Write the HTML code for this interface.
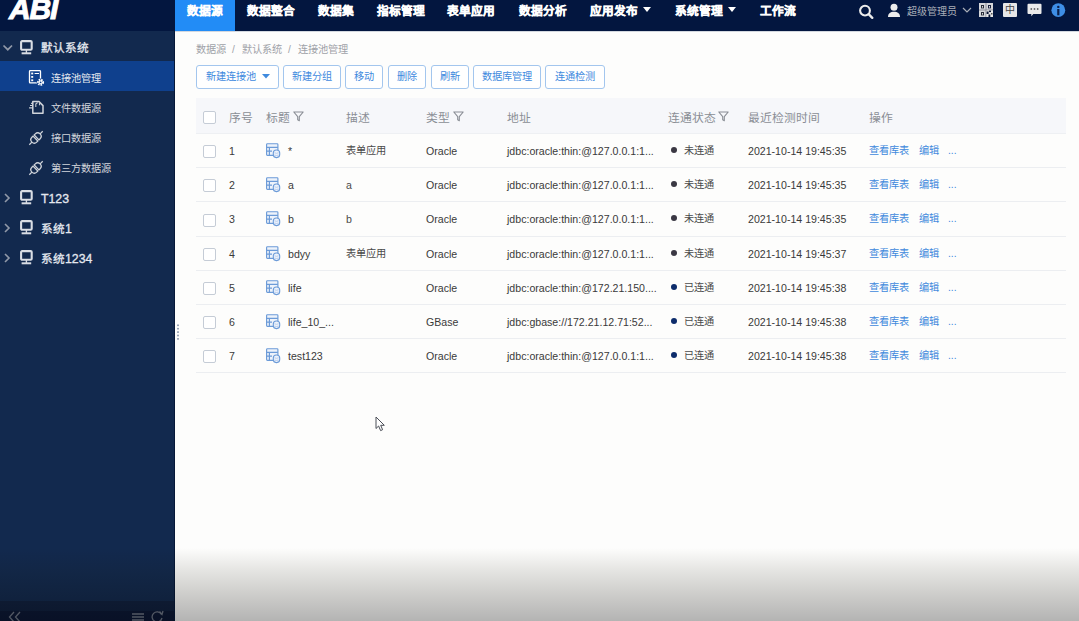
<!DOCTYPE html>
<html lang="zh-CN"><head><meta charset="utf-8">
<style>
*{box-sizing:border-box;margin:0;padding:0}
html,body{width:1079px;height:621px;overflow:hidden;background:#fdfdfc;font-family:"Liberation Sans",sans-serif;}
.a{position:absolute;white-space:nowrap}
#hdr{position:absolute;left:0;top:0;width:1079px;height:31px;background:#03163f}
#logo{position:absolute;left:9px;top:-8px;color:#fff;font:italic bold 30px "Liberation Sans",sans-serif;letter-spacing:-1.2px;-webkit-text-stroke:1px #fff}
.nav{position:absolute;top:3px;line-height:16px;color:#f4f4f4;font-size:11.7px;font-weight:700;-webkit-text-stroke:0.35px #fff;white-space:nowrap}
#side{position:absolute;left:0;top:31px;width:175px;height:590px;background:#12294e;border-right:1px solid #061838}
.srow{position:absolute;left:0;width:174px;height:30px;color:#e4e8ef;white-space:nowrap}
.srow.act{background:#0f408d}
.st{position:absolute;top:8px;line-height:16px}
.crumb{position:absolute;top:43px;font-size:10.2px;line-height:14px;color:#9fa2a8;white-space:nowrap}
.btn{position:absolute;top:65px;height:24px;border:1px solid #a3c6ee;border-radius:3px;color:#3f8ade;font-size:10.2px;line-height:22px;text-align:center;background:#fff;white-space:nowrap}
#thead{position:absolute;left:196px;top:98px;width:870px;height:36px;background:#f6f7fa;border-bottom:1px solid #eef0f3}
.cb{position:absolute;left:203px;width:13px;height:13px;border:1px solid #c5ccd6;border-radius:2px;background:#fff}
.th{position:absolute;top:109.5px;font-size:11.8px;line-height:16px;color:#8a8e95;white-space:nowrap}
.td{position:absolute;font-size:10.6px;line-height:14px;color:#3a3a3a;white-space:nowrap}
.rline{position:absolute;left:196px;width:870px;height:1px;background:#eceef1}
.lk{color:#3f89dc;font-size:10.2px}
.dot{display:inline-block;width:6px;height:6px;border-radius:50%;background:#3a3843;margin-right:7px;vertical-align:1px}
.dot.on{background:#0d2c6b}
#fade{position:absolute;left:0;top:548px;width:1079px;height:73px;background:linear-gradient(to bottom,rgba(20,18,0,0) 0%,rgba(20,18,0,0.1) 30%,rgba(10,8,0,0.2) 65%,rgba(0,0,0,0.29) 100%)}
</style></head><body>
<div class="a" style="left:175px;top:31px;width:904px;height:1px;background:#d3d8df"></div>
<div id="hdr">
  <div id="logo">ABI</div>
  <div class="a" style="left:175px;top:0;width:60px;height:31px;background:#228cf6"></div>
  <div class="nav" style="left:187px">数据源</div>
  <div class="nav" style="left:247px">数据整合</div>
  <div class="nav" style="left:318px">数据集</div>
  <div class="nav" style="left:377px">指标管理</div>
  <div class="nav" style="left:447px">表单应用</div>
  <div class="nav" style="left:519px">数据分析</div>
  <div class="nav" style="left:590px">应用发布</div>
  <div class="nav" style="left:675px">系统管理</div>
  <div class="nav" style="left:760px">工作流</div>
  <svg class="a" style="left:643px;top:7px" width="8" height="6"><path d="M0 0H8L4 5Z" fill="#fff"/></svg>
  <svg class="a" style="left:728px;top:7px" width="8" height="6"><path d="M0 0H8L4 5Z" fill="#fff"/></svg>
  <!-- search -->
  <svg class="a" style="left:858px;top:3px" width="17" height="17"><circle cx="7" cy="7.6" r="4.9" fill="none" stroke="#ececec" stroke-width="2.1"/><path d="M10.6 11.2L14.3 14.8" stroke="#ececec" stroke-width="2.4" stroke-linecap="round"/></svg>
  <svg class="a" style="left:887px;top:2px" width="15" height="16"><circle cx="7" cy="5.2" r="3.5" fill="#ececec"/><path d="M1 15C1 11.2 3.5 9.8 7 9.8S13 11.2 13 15Z" fill="#ececec"/></svg>
  <div class="a" style="left:907px;top:5px;font-size:10px;line-height:14px;color:#a9aeb7">超级管理员</div>
  <svg class="a" style="left:962px;top:6.5px" width="10" height="7"><path d="M1 1L5 5L9 1" fill="none" stroke="#a9aeb7" stroke-width="1.2"/></svg>
  <svg class="a" style="left:979px;top:3px" width="14" height="14"><rect x="0" y="0" width="14" height="14" fill="#d4d6da"/><path d="M7 0V14M0 7H14" stroke="#7d828c" stroke-width="0.8"/><rect x="2" y="2" width="3" height="3.4" fill="#2a2f3a"/><rect x="9" y="2" width="3" height="3.4" fill="#1d2540"/><rect x="2" y="9" width="3" height="3.4" fill="#2a2f3a"/><rect x="3.1" y="3" width="0.9" height="1.6" fill="#eee"/><rect x="10.1" y="3" width="0.9" height="1.6" fill="#eee"/><rect x="3.1" y="10" width="0.9" height="1.6" fill="#eee"/><rect x="7.5" y="7.5" width="6.5" height="6.5" fill="#e9e9e9"/><rect x="7.6" y="8.5" width="2" height="2.5" fill="#0a1533"/><rect x="10" y="7.6" width="2" height="1.5" fill="#0a1533"/><rect x="9.5" y="11.5" width="1.8" height="2.5" fill="#0a1533"/><rect x="12" y="10" width="1.5" height="1.5" fill="#555"/></svg>
  <div class="a" style="left:1003px;top:3px;width:14px;height:14px;background:#e6e6e6;border-radius:1px;color:#444;font-size:10px;line-height:14px;text-align:center">中</div>
  <svg class="a" style="left:1027px;top:3px" width="15" height="14"><path d="M1.5 0.8H13.5A1 1 0 0 1 14.5 1.8V10A1 1 0 0 1 13.5 11H6.3L4.3 13.3V11H1.5A1 1 0 0 1 0.5 10V1.8A1 1 0 0 1 1.5 0.8Z" fill="#eaeaea"/><circle cx="4.3" cy="6" r="0.9" fill="#666"/><circle cx="7.5" cy="6" r="0.9" fill="#666"/><circle cx="10.7" cy="6" r="0.9" fill="#666"/></svg>
  <svg class="a" style="left:1051px;top:3px" width="15" height="15"><circle cx="7.3" cy="7.2" r="6.9" fill="#3e8ee6"/><circle cx="7.3" cy="3.9" r="1.2" fill="#0b1f4a"/><path d="M6.2 6H8.4V12.3H6.2Z" fill="#0b1f4a"/></svg>
</div>

<div id="side">
  <div class="srow" style="top:1px">
    <svg class="a" style="left:2px;top:12px" width="11" height="8"><path d="M1.5 1.5L5.8 5.7L10 1.5" fill="none" stroke="#9199a8" stroke-width="1.7"/></svg>
    <svg class="a" style="left:20px;top:8px" width="14" height="15"><rect x="1.1" y="1.1" width="10.6" height="8.7" rx="1" fill="none" stroke="#d9dde4" stroke-width="2.1"/><path d="M1.6 13.3H11.2" stroke="#d9dde4" stroke-width="2"/><path d="M6.4 9.5V13" stroke="#d9dde4" stroke-width="1.4"/></svg>
    <div class="st" style="left:41px;font-size:11.6px;-webkit-text-stroke:0.3px #e4e8ef">默认系统</div>
  </div>
  <div class="srow act" style="top:30px">
    <svg class="a" style="left:28px;top:8px" width="17" height="17"><rect x="1.5" y="1.6" width="11" height="12.3" rx="0.8" fill="none" stroke="#fff" stroke-width="1.3"/><rect x="3.2" y="3.6" width="2" height="1.8" fill="#fff"/><rect x="3.2" y="7" width="2" height="1.8" fill="#fff"/><rect x="3.2" y="10.4" width="2" height="1.8" fill="#fff"/><path d="M6.6 4.5H11" stroke="#fff" stroke-width="1"/><circle cx="12.6" cy="13.3" r="3.9" fill="#0f408d"/><circle cx="12.6" cy="13.3" r="2.6" fill="none" stroke="#fff" stroke-width="1.8" stroke-dasharray="1.6 0.9"/><circle cx="12.6" cy="13.3" r="2" fill="#fff"/><circle cx="12.6" cy="13.3" r="0.9" fill="#0f408d"/></svg>
    <div class="st" style="left:51px;top:9.5px;font-size:10.2px">连接池管理</div>
  </div>
  <div class="srow" style="top:60px">
    <svg class="a" style="left:29px;top:9px" width="16" height="16"><path d="M3.8 1.6H10L14 5.6V13.3H3.8Z" fill="none" stroke="#d0d4da" stroke-width="1.5" stroke-linejoin="round"/><path d="M6.8 7V4L8.6 2.5M10.5 2.5V5.3" fill="none" stroke="#c4c9d1" stroke-width="1.1"/><path d="M2.1 3.4H4M1 5.5H4M0.1 7.8H4" stroke="#d0d4da" stroke-width="1.2"/></svg>
    <div class="st" style="left:51px;top:9.5px;font-size:10.2px;color:#d2d6dc">文件数据源</div>
  </div>
  <div class="srow" style="top:90px">
    <svg class="a" style="left:28px;top:9px" width="16" height="16"><g transform="rotate(-45 8 8)" fill="none" stroke="#cfd3da" stroke-width="1.3"><path d="M7.2 4.6V11.4H5.6A3.4 3.4 0 0 1 5.6 4.6Z"/><path d="M8.8 4.6V11.4H10.4A3.4 3.4 0 0 0 10.4 4.6Z"/><path d="M2.2 8H-1.5M13.8 8H17.5"/></g></svg>
    <div class="st" style="left:51px;top:9.5px;font-size:10.2px;color:#d2d6dc">接口数据源</div>
  </div>
  <div class="srow" style="top:120px">
    <svg class="a" style="left:28px;top:9px" width="16" height="16"><g transform="rotate(-45 8 8)" fill="none" stroke="#cfd3da" stroke-width="1.3"><path d="M7.2 4.6V11.4H5.6A3.4 3.4 0 0 1 5.6 4.6Z"/><path d="M8.8 4.6V11.4H10.4A3.4 3.4 0 0 0 10.4 4.6Z"/><path d="M2.2 8H-1.5M13.8 8H17.5"/></g></svg>
    <div class="st" style="left:51px;top:9.5px;font-size:10.2px;color:#d2d6dc">第三方数据源</div>
  </div>
  <div class="srow" style="top:151px">
    <svg class="a" style="left:4px;top:11px" width="7" height="10"><path d="M1 1L5 5L1 9" fill="none" stroke="#9199a8" stroke-width="1.6"/></svg>
    <svg class="a" style="left:20px;top:8px" width="14" height="15"><rect x="1.1" y="1.1" width="10.6" height="8.7" rx="1" fill="none" stroke="#d9dde4" stroke-width="2.1"/><path d="M1.6 13.3H11.2" stroke="#d9dde4" stroke-width="2"/><path d="M6.4 9.5V13" stroke="#d9dde4" stroke-width="1.4"/></svg>
    <div class="st" style="top:9px;left:41px;font-size:11.6px;-webkit-text-stroke:0.3px #e4e8ef"><span style="font-size:12.3px">T123</span></div>
  </div>
  <div class="srow" style="top:181px">
    <svg class="a" style="left:4px;top:11px" width="7" height="10"><path d="M1 1L5 5L1 9" fill="none" stroke="#9199a8" stroke-width="1.6"/></svg>
    <svg class="a" style="left:20px;top:8px" width="14" height="15"><rect x="1.1" y="1.1" width="10.6" height="8.7" rx="1" fill="none" stroke="#d9dde4" stroke-width="2.1"/><path d="M1.6 13.3H11.2" stroke="#d9dde4" stroke-width="2"/><path d="M6.4 9.5V13" stroke="#d9dde4" stroke-width="1.4"/></svg>
    <div class="st" style="top:9px;left:41px;font-size:11.6px;-webkit-text-stroke:0.3px #e4e8ef">系统<span style="font-size:12.3px">1</span></div>
  </div>
  <div class="srow" style="top:211px">
    <svg class="a" style="left:4px;top:11px" width="7" height="10"><path d="M1 1L5 5L1 9" fill="none" stroke="#9199a8" stroke-width="1.6"/></svg>
    <svg class="a" style="left:20px;top:8px" width="14" height="15"><rect x="1.1" y="1.1" width="10.6" height="8.7" rx="1" fill="none" stroke="#d9dde4" stroke-width="2.1"/><path d="M1.6 13.3H11.2" stroke="#d9dde4" stroke-width="2"/><path d="M6.4 9.5V13" stroke="#d9dde4" stroke-width="1.4"/></svg>
    <div class="st" style="top:9px;left:41px;font-size:11.6px;-webkit-text-stroke:0.3px #e4e8ef">系统<span style="font-size:12.3px">1234</span></div>
  </div>
  <div class="a" style="left:0;top:570px;width:174px;height:10px;background:#10203f"></div><div class="a" style="left:0;top:580px;width:174px;height:10px;background:#0c1836"></div>
  <svg class="a" style="left:8px;top:580px" width="14" height="12"><path d="M6 1L1.5 6L6 11M12 1L7.5 6L12 11" fill="none" stroke="#6f7787" stroke-width="1.3"/></svg>
  <svg class="a" style="left:132px;top:581px" width="12" height="10"><path d="M0 2H12M0 5H12M0 8H12" stroke="#6f7787" stroke-width="1.3"/></svg>
  <svg class="a" style="left:151px;top:579px" width="13" height="12"><path d="M10.5 4.5A5 5 0 1 0 11 8" fill="none" stroke="#6f7787" stroke-width="1.3"/><path d="M8.5 1.5L11 4.5L12 1" fill="none" stroke="#6f7787" stroke-width="1.3"/></svg>
</div>

<div class="crumb" style="left:196px">数据源</div><div class="crumb" style="left:232px">/</div><div class="crumb" style="left:242px">默认系统</div><div class="crumb" style="left:288px">/</div><div class="crumb" style="left:298px">连接池管理</div>
<div class="btn" style="left:196px;width:83px">新建连接池<svg style="margin-left:6px;vertical-align:1px" width="8" height="5"><path d="M0 0H8L4 4.5Z" fill="#3f8ade"/></svg></div>
<div class="btn" style="left:283px;width:58px">新建分组</div>
<div class="btn" style="left:345px;width:38px">移动</div>
<div class="btn" style="left:388px;width:38px">删除</div>
<div class="btn" style="left:431px;width:38px">刷新</div>
<div class="btn" style="left:473px;width:68px">数据库管理</div>
<div class="btn" style="left:545px;width:60px">连通检测</div>

<div id="thead"></div>
<div class="cb" style="top:111px"></div>
<div class="th" style="left:229px">序号</div>
<div class="th" style="left:266px">标题</div>
<div class="th" style="left:346px">描述</div>
<div class="th" style="left:426px">类型</div>
<div class="th" style="left:507px">地址</div>
<div class="th" style="left:668px">连通状态</div>
<div class="th" style="left:748px">最近检测时间</div>
<div class="th" style="left:869px">操作</div>
<!--ROWS--><div class="cb" style="top:145px"></div>
<div class="td" style="left:229px;top:144px">1</div>
<svg class="a" style="left:265px;top:142px" width="17" height="17"><rect x="1.6" y="1.7" width="11.3" height="11.6" rx="0.8" fill="#eef3fb" stroke="#6c9bd8" stroke-width="1.15"/><path d="M1.6 5.3H12.9M4.4 5.3V13.3M1.6 9.2H7" stroke="#6c9bd8" stroke-width="1.2"/><rect x="8.3" y="8" width="6.4" height="7.6" rx="3" fill="#eef3fb" stroke="#6c9bd8" stroke-width="1.1"/><path d="M9.5 10.8Q11.5 11.8 13.5 10.8M9.5 13Q11.5 14 13.5 13" fill="none" stroke="#a9c3e8" stroke-width="0.8"/></svg>
<div class="td" style="left:288px;top:144px">*</div>
<div class="td" style="left:346px;top:144px;font-size:10.2px;color:#4a4a4a">表单应用</div>
<div class="td" style="left:426px;top:144px">Oracle</div>
<div class="td" style="left:507px;top:144px">jdbc:oracle:thin:@127.0.0.1:1...</div>
<div class="td" style="left:671px;top:144px;font-size:10.2px;color:#4a4a4a"><span class="dot"></span>未连通</div>
<div class="td" style="left:748px;top:144px">2021-10-14 19:45:35</div>
<div class="td lk" style="left:869px;top:144px">查看库表</div>
<div class="td lk" style="left:919px;top:144px">编辑</div>
<div class="td lk" style="left:948px;top:144px">...</div>
<div class="rline" style="top:167px"></div>
<div class="cb" style="top:179px"></div>
<div class="td" style="left:229px;top:178px">2</div>
<svg class="a" style="left:265px;top:176px" width="17" height="17"><rect x="1.6" y="1.7" width="11.3" height="11.6" rx="0.8" fill="#eef3fb" stroke="#6c9bd8" stroke-width="1.15"/><path d="M1.6 5.3H12.9M4.4 5.3V13.3M1.6 9.2H7" stroke="#6c9bd8" stroke-width="1.2"/><rect x="8.3" y="8" width="6.4" height="7.6" rx="3" fill="#eef3fb" stroke="#6c9bd8" stroke-width="1.1"/><path d="M9.5 10.8Q11.5 11.8 13.5 10.8M9.5 13Q11.5 14 13.5 13" fill="none" stroke="#a9c3e8" stroke-width="0.8"/></svg>
<div class="td" style="left:288px;top:178px">a</div>
<div class="td" style="left:346px;top:178px;font-size:10.6px;color:#4a4a4a">a</div>
<div class="td" style="left:426px;top:178px">Oracle</div>
<div class="td" style="left:507px;top:178px">jdbc:oracle:thin:@127.0.0.1:1...</div>
<div class="td" style="left:671px;top:178px;font-size:10.2px;color:#4a4a4a"><span class="dot"></span>未连通</div>
<div class="td" style="left:748px;top:178px">2021-10-14 19:45:35</div>
<div class="td lk" style="left:869px;top:178px">查看库表</div>
<div class="td lk" style="left:919px;top:178px">编辑</div>
<div class="td lk" style="left:948px;top:178px">...</div>
<div class="rline" style="top:201px"></div>
<div class="cb" style="top:214px"></div>
<div class="td" style="left:229px;top:212px">3</div>
<svg class="a" style="left:265px;top:210px" width="17" height="17"><rect x="1.6" y="1.7" width="11.3" height="11.6" rx="0.8" fill="#eef3fb" stroke="#6c9bd8" stroke-width="1.15"/><path d="M1.6 5.3H12.9M4.4 5.3V13.3M1.6 9.2H7" stroke="#6c9bd8" stroke-width="1.2"/><rect x="8.3" y="8" width="6.4" height="7.6" rx="3" fill="#eef3fb" stroke="#6c9bd8" stroke-width="1.1"/><path d="M9.5 10.8Q11.5 11.8 13.5 10.8M9.5 13Q11.5 14 13.5 13" fill="none" stroke="#a9c3e8" stroke-width="0.8"/></svg>
<div class="td" style="left:288px;top:212px">b</div>
<div class="td" style="left:346px;top:212px;font-size:10.6px;color:#4a4a4a">b</div>
<div class="td" style="left:426px;top:212px">Oracle</div>
<div class="td" style="left:507px;top:212px">jdbc:oracle:thin:@127.0.0.1:1...</div>
<div class="td" style="left:671px;top:212px;font-size:10.2px;color:#4a4a4a"><span class="dot"></span>未连通</div>
<div class="td" style="left:748px;top:212px">2021-10-14 19:45:35</div>
<div class="td lk" style="left:869px;top:212px">查看库表</div>
<div class="td lk" style="left:919px;top:212px">编辑</div>
<div class="td lk" style="left:948px;top:212px">...</div>
<div class="rline" style="top:236px"></div>
<div class="cb" style="top:248px"></div>
<div class="td" style="left:229px;top:247px">4</div>
<svg class="a" style="left:265px;top:245px" width="17" height="17"><rect x="1.6" y="1.7" width="11.3" height="11.6" rx="0.8" fill="#eef3fb" stroke="#6c9bd8" stroke-width="1.15"/><path d="M1.6 5.3H12.9M4.4 5.3V13.3M1.6 9.2H7" stroke="#6c9bd8" stroke-width="1.2"/><rect x="8.3" y="8" width="6.4" height="7.6" rx="3" fill="#eef3fb" stroke="#6c9bd8" stroke-width="1.1"/><path d="M9.5 10.8Q11.5 11.8 13.5 10.8M9.5 13Q11.5 14 13.5 13" fill="none" stroke="#a9c3e8" stroke-width="0.8"/></svg>
<div class="td" style="left:288px;top:247px">bdyy</div>
<div class="td" style="left:346px;top:247px;font-size:10.2px;color:#4a4a4a">表单应用</div>
<div class="td" style="left:426px;top:247px">Oracle</div>
<div class="td" style="left:507px;top:247px">jdbc:oracle:thin:@127.0.0.1:1...</div>
<div class="td" style="left:671px;top:247px;font-size:10.2px;color:#4a4a4a"><span class="dot"></span>未连通</div>
<div class="td" style="left:748px;top:247px">2021-10-14 19:45:37</div>
<div class="td lk" style="left:869px;top:247px">查看库表</div>
<div class="td lk" style="left:919px;top:247px">编辑</div>
<div class="td lk" style="left:948px;top:247px">...</div>
<div class="rline" style="top:270px"></div>
<div class="cb" style="top:282px"></div>
<div class="td" style="left:229px;top:281px">5</div>
<svg class="a" style="left:265px;top:279px" width="17" height="17"><rect x="1.6" y="1.7" width="11.3" height="11.6" rx="0.8" fill="#eef3fb" stroke="#6c9bd8" stroke-width="1.15"/><path d="M1.6 5.3H12.9M4.4 5.3V13.3M1.6 9.2H7" stroke="#6c9bd8" stroke-width="1.2"/><rect x="8.3" y="8" width="6.4" height="7.6" rx="3" fill="#eef3fb" stroke="#6c9bd8" stroke-width="1.1"/><path d="M9.5 10.8Q11.5 11.8 13.5 10.8M9.5 13Q11.5 14 13.5 13" fill="none" stroke="#a9c3e8" stroke-width="0.8"/></svg>
<div class="td" style="left:288px;top:281px">life</div>
<div class="td" style="left:426px;top:281px">Oracle</div>
<div class="td" style="left:507px;top:281px">jdbc:oracle:thin:@172.21.150....</div>
<div class="td" style="left:671px;top:281px;font-size:10.2px;color:#4a4a4a"><span class="dot on"></span>已连通</div>
<div class="td" style="left:748px;top:281px">2021-10-14 19:45:38</div>
<div class="td lk" style="left:869px;top:281px">查看库表</div>
<div class="td lk" style="left:919px;top:281px">编辑</div>
<div class="td lk" style="left:948px;top:281px">...</div>
<div class="rline" style="top:304px"></div>
<div class="cb" style="top:316px"></div>
<div class="td" style="left:229px;top:315px">6</div>
<svg class="a" style="left:265px;top:313px" width="17" height="17"><rect x="1.6" y="1.7" width="11.3" height="11.6" rx="0.8" fill="#eef3fb" stroke="#6c9bd8" stroke-width="1.15"/><path d="M1.6 5.3H12.9M4.4 5.3V13.3M1.6 9.2H7" stroke="#6c9bd8" stroke-width="1.2"/><rect x="8.3" y="8" width="6.4" height="7.6" rx="3" fill="#eef3fb" stroke="#6c9bd8" stroke-width="1.1"/><path d="M9.5 10.8Q11.5 11.8 13.5 10.8M9.5 13Q11.5 14 13.5 13" fill="none" stroke="#a9c3e8" stroke-width="0.8"/></svg>
<div class="td" style="left:288px;top:315px">life_10_...</div>
<div class="td" style="left:426px;top:315px">GBase</div>
<div class="td" style="left:507px;top:315px">jdbc:gbase://172.21.12.71:52...</div>
<div class="td" style="left:671px;top:315px;font-size:10.2px;color:#4a4a4a"><span class="dot on"></span>已连通</div>
<div class="td" style="left:748px;top:315px">2021-10-14 19:45:38</div>
<div class="td lk" style="left:869px;top:315px">查看库表</div>
<div class="td lk" style="left:919px;top:315px">编辑</div>
<div class="td lk" style="left:948px;top:315px">...</div>
<div class="rline" style="top:338px"></div>
<div class="cb" style="top:350px"></div>
<div class="td" style="left:229px;top:349px">7</div>
<svg class="a" style="left:265px;top:347px" width="17" height="17"><rect x="1.6" y="1.7" width="11.3" height="11.6" rx="0.8" fill="#eef3fb" stroke="#6c9bd8" stroke-width="1.15"/><path d="M1.6 5.3H12.9M4.4 5.3V13.3M1.6 9.2H7" stroke="#6c9bd8" stroke-width="1.2"/><rect x="8.3" y="8" width="6.4" height="7.6" rx="3" fill="#eef3fb" stroke="#6c9bd8" stroke-width="1.1"/><path d="M9.5 10.8Q11.5 11.8 13.5 10.8M9.5 13Q11.5 14 13.5 13" fill="none" stroke="#a9c3e8" stroke-width="0.8"/></svg>
<div class="td" style="left:288px;top:349px">test123</div>
<div class="td" style="left:426px;top:349px">Oracle</div>
<div class="td" style="left:507px;top:349px">jdbc:oracle:thin:@127.0.0.1:1...</div>
<div class="td" style="left:671px;top:349px;font-size:10.2px;color:#4a4a4a"><span class="dot on"></span>已连通</div>
<div class="td" style="left:748px;top:349px">2021-10-14 19:45:38</div>
<div class="td lk" style="left:869px;top:349px">查看库表</div>
<div class="td lk" style="left:919px;top:349px">编辑</div>
<div class="td lk" style="left:948px;top:349px">...</div>
<div class="rline" style="top:372px"></div><!--/ROWS-->
<svg class="a" style="left:293px;top:111px" width="11" height="11"><path d="M0.8 1H10.2L6.3 5.6V9.8L4.7 8.8V5.6Z" fill="none" stroke="#8a8e95" stroke-width="1.1" stroke-linejoin="round"/></svg>
<svg class="a" style="left:453px;top:111px" width="11" height="11"><path d="M0.8 1H10.2L6.3 5.6V9.8L4.7 8.8V5.6Z" fill="none" stroke="#8a8e95" stroke-width="1.1" stroke-linejoin="round"/></svg>
<svg class="a" style="left:718px;top:111px" width="11" height="11"><path d="M0.8 1H10.2L6.3 5.6V9.8L4.7 8.8V5.6Z" fill="none" stroke="#8a8e95" stroke-width="1.1" stroke-linejoin="round"/></svg>
<svg class="a" style="left:176px;top:323px" width="4" height="18"><g fill="#97a3b6"><rect x="1" y="1.5" width="2" height="1.6"/><rect x="1" y="4.9" width="2" height="1.6"/><rect x="1" y="8.3" width="2" height="1.6"/><rect x="1" y="11.7" width="2" height="1.6"/><rect x="1" y="15.1" width="2" height="1.6"/></g></svg>
<svg class="a" style="left:373px;top:415px" width="16" height="18"><path d="M3 2V13.5L5.6 11L7.6 15.6L9.6 14.7L7.7 10.3H11.3Z" fill="#fff" stroke="#4a4e57" stroke-width="1" stroke-linejoin="round"/></svg>
<div id="fade"></div>
</body></html>
